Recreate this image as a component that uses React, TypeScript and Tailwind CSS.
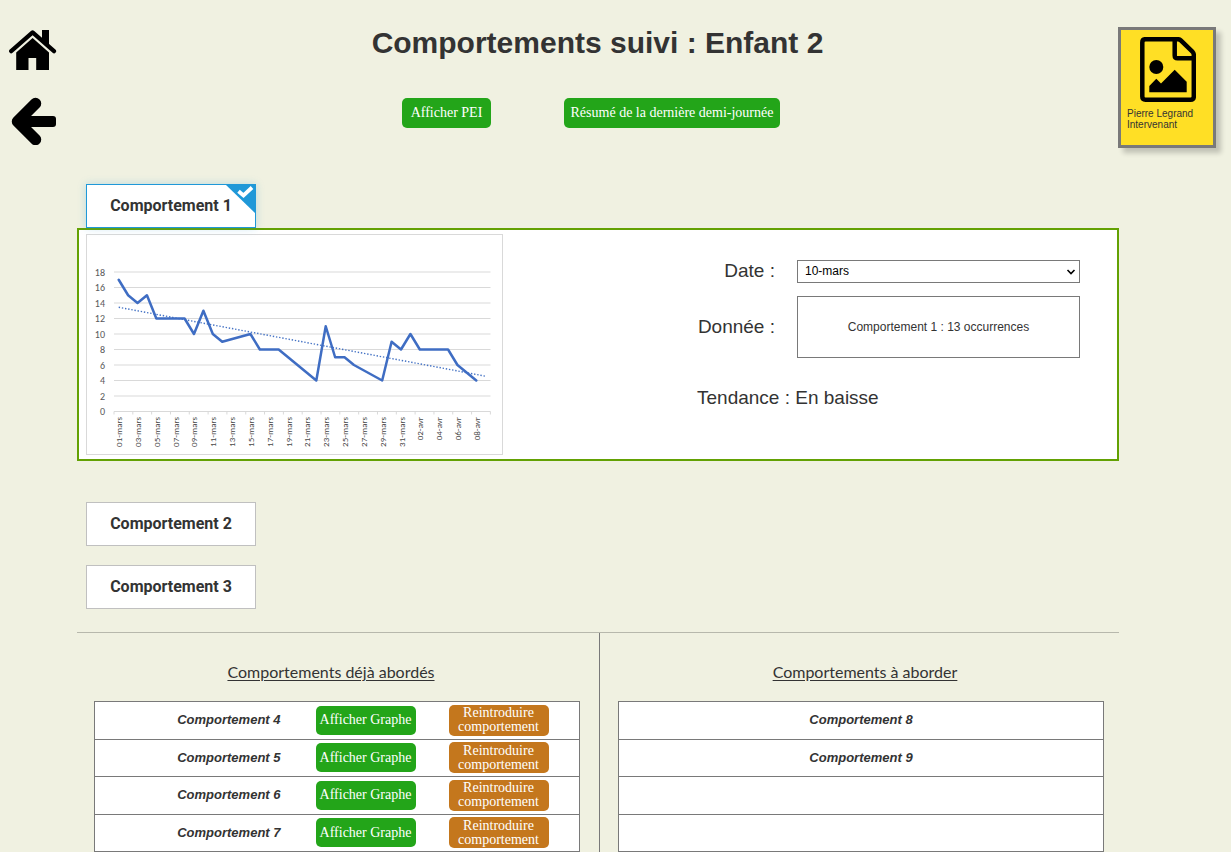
import React, { useState } from "react";

const POINTS: [number, number][] = [
  [1, 17], [2, 15], [3, 14], [4, 15], [5, 12], [8, 12], [9, 10], [10, 13], [11, 10],
  [12, 9], [15, 10], [16, 8], [18, 8], [22, 4], [23, 11], [24, 7], [25, 7], [26, 6],
  [29, 4], [30, 9], [31, 8], [32, 10], [33, 8], [36, 8], [37, 6], [39, 4],
];

const DAYS = [
  "01-mars", "03-mars", "05-mars", "07-mars", "09-mars", "11-mars", "13-mars",
  "15-mars", "17-mars", "19-mars", "21-mars", "23-mars", "25-mars", "27-mars",
  "29-mars", "31-mars", "02-avr", "04-avr", "06-avr", "08-avr",
];

const STEP = 9.41;
const chartX = (day: number) => 28 + (day - 0.5) * STEP;
const chartY = (value: number) => 177.5 - value * 7.75;

function HomeIcon() {
  return (
    <svg viewBox="0 0 48 42" className="h-[42px] w-12" aria-hidden="true">
      <path d="M33 1h7v17l-7-6z" />
      <path d="M2.2 22.2 23.6 3.4 45 22.2" fill="none" stroke="#000" strokeWidth="4.2" strokeLinecap="round" strokeLinejoin="round" />
      <path d="M23.6 9 40 23.5V41H27.2V29h-7.7v12H7.2V23.5z" />
    </svg>
  );
}

function BackIcon() {
  return (
    <svg viewBox="0 0 48 48" className="size-12" aria-hidden="true">
      <path d="M26.5 6.5 8.5 24.5l18 18" fill="none" stroke="#000" strokeWidth="11.5" strokeLinecap="round" strokeLinejoin="round" />
      <rect x="9" y="19" width="38" height="11" rx="3" />
    </svg>
  );
}

function FileImageIcon() {
  return (
    <svg viewBox="0 0 56 65" className="h-[65px] w-14" aria-hidden="true">
      <path d="M5.5 2.2H38q1.6 0 2.8 1.2L52.4 14.6q1.4 1.4 1.4 3.2V59.5q0 3.2-3.2 3.2H5.5q-3.2 0-3.2-3.2V5.4q0-3.2 3.2-3.2z" fill="none" stroke="#000" strokeWidth="4.5" />
      <path d="M34.7 3v15.5q0 2.8 2.8 2.8H53" fill="none" stroke="#000" strokeWidth="4.5" />
      <circle cx="16.3" cy="30" r="7" />
      <path d="M9.3 55.3v-6.3l7-7.3 4.7 4.7L34.7 32.7l12 12v10.6z" />
    </svg>
  );
}

function Chart() {
  return (
    <svg
      viewBox="0 0 417 221"
      className="h-[221px] w-[417px] shrink-0 font-['Carlito','Lato',sans-serif]"
      role="img"
      aria-label="Graphe Comportement 1"
    >
      <rect x="0.5" y="0.5" width="416" height="220" fill="#fff" stroke="#d9d9d9" />
      {[0, 2, 4, 6, 8, 10, 12, 14, 16, 18].map((v) => (
        <g key={v}>
          <line x1="28" x2="404.5" y1={chartY(v)} y2={chartY(v)} stroke="#d9d9d9" strokeWidth="1.2" />
          <text x="19" y={chartY(v) + 3.5} textAnchor="end" className="fill-[#595959] text-[10px]">{v}</text>
        </g>
      ))}
      {Array.from({ length: 21 }, (_, i) => (
        <line key={i} x1={28 + i * STEP * 2} x2={28 + i * STEP * 2} y1="177.5" y2="180.5" stroke="#d9d9d9" />
      ))}
      {DAYS.map((d, i) => (
        <text
          key={d}
          textAnchor="end"
          transform={`translate(${chartX(i * 2 + 1) + 3.5} 183) rotate(-90)`}
          className="fill-[#484848] text-[9px]"
        >
          {d}
        </text>
      ))}
      <line x1={chartX(1)} y1={chartY(13.45)} x2={chartX(40)} y2={chartY(4.55)} stroke="#4472c4" strokeWidth="1.4" strokeDasharray="1.4 1.8" />
      <polyline
        points={POINTS.map(([d, v]) => `${chartX(d)},${chartY(v)}`).join(" ")}
        fill="none"
        stroke="#3f6dc3"
        strokeWidth="2.5"
        strokeLinecap="round"
        strokeLinejoin="round"
      />
    </svg>
  );
}

function Action({ children, tone = "green", className = "" }: { children: React.ReactNode; tone?: "green" | "orange"; className?: string }) {
  return (
    <button
      type="button"
      className={`rounded-[5px] font-['Liberation_Serif',serif] text-sm leading-[14px] text-white ${tone === "green" ? "bg-[#23a519]" : "bg-[#c4771d]"} ${className}`}
    >
      {children}
    </button>
  );
}

function Tab({ label, active, onClick }: { label: string; active: boolean; onClick: () => void }) {
  return (
    <button
      type="button"
      aria-pressed={active}
      onClick={onClick}
      className={`relative ml-[9px] block h-11 w-[170px] border bg-white font-['Roboto',sans-serif] text-base font-bold ${active ? "border-[#1f98d8] shadow-[0_0_8px_rgba(31,152,216,0.25)]" : "border-[#c0c0c0]"}`}
    >
      {label}
      {active && (
        <svg viewBox="0 0 29 28" className="absolute top-0 right-0 h-7 w-[29px]" aria-hidden="true">
          <path d="M0 0h29v28z" fill="#1f98d8" />
          <path d="m12.5 6.2 5 4.3 8.5-8" fill="none" stroke="#fff" strokeWidth="3.8" />
        </svg>
      )}
    </button>
  );
}

const HEADING = "text-center font-['Lato',sans-serif] text-base leading-6 underline underline-offset-2";
const TABLE = "mt-[17px] h-[151px] w-full border-collapse border border-[#797979] bg-white";
const NAME = "text-[13px] leading-5 font-bold italic";

export default function App() {
  const [selected, setSelected] = useState(1);
  return (
    <div className="h-screen overflow-hidden bg-[#f0f1e1] font-['Liberation_Sans',Arial,sans-serif] text-[#333333]">
      <header className="flex h-[184px]">
        <nav className="flex w-[77px] flex-col gap-[26px] pt-[29px] pl-[9px] text-black">
          <a href="#accueil" aria-label="Accueil"><HomeIcon /></a>
          <a href="#retour" aria-label="Retour"><BackIcon /></a>
        </nav>
        <div className="flex-1 pt-6 text-center">
          <h1 className="text-[30px] leading-[38px] font-bold">Comportements suivi : Enfant 2</h1>
          <div className="mt-9 flex justify-center gap-[73px] pr-[13px]">
            <Action className="h-[30px] w-[89px]">Afficher PEI</Action>
            <Action className="h-[30px] w-[216px]">Résumé de la dernière demi-journée</Action>
          </div>
        </div>
        <div className="w-[113px] pt-[27px]">
          <div className="h-[121px] w-[98px] border-3 border-[#797979] bg-[#ffdf25] pt-[7px] text-black shadow-[5px_5px_5px_rgba(0,0,0,0.2)]">
            <div className="flex pl-[19px]"><FileImageIcon /></div>
            <p className="mt-[6px] pl-[6px] text-[10px] leading-[11px] text-[#333333]">Pierre Legrand<br />Intervenant</p>
          </div>
        </div>
      </header>

      <main className="mr-28 ml-[77px]">
        <Tab label="Comportement 1" active={selected === 1} onClick={() => setSelected(1)} />
        <section className="flex h-[233px] justify-between border-2 border-[#63a103] bg-white pt-1 pr-[37px] pl-[7px]">
          <Chart />
          <div className="w-[383px] pt-[25px] text-[19px] leading-6">
            <div className="flex items-center justify-between">
              <label htmlFor="date" className="w-[78px] text-right">Date :</label>
              <div className="relative w-[283px]">
                <select id="date" defaultValue="10-mars" className="block h-[23px] w-full appearance-none border border-[#797979] bg-white pl-[7px] text-[12px] leading-4 text-black">
                  <option>09-mars</option>
                  <option>10-mars</option>
                  <option>11-mars</option>
                </select>
                <svg viewBox="0 0 10 6" className="pointer-events-none absolute top-[9px] right-1 h-[6px] w-[10px]" aria-hidden="true">
                  <path d="m1.5 1 3.5 3.5L8.5 1" fill="none" stroke="#000" strokeWidth="1.6" />
                </svg>
              </div>
            </div>
            <div className="mt-[13px] flex items-center justify-between">
              <span className="w-[78px] text-right">Donnée :</span>
              <output className="flex h-[62px] w-[283px] items-center justify-center border border-[#797979] text-[12px]">Comportement 1 : 13 occurrences</output>
            </div>
            <p className="mt-7">Tendance : En baisse</p>
          </div>
        </section>

        <div className="mt-[41px] flex flex-col gap-[19px]">
          <Tab label="Comportement 2" active={selected === 2} onClick={() => setSelected(2)} />
          <Tab label="Comportement 3" active={selected === 3} onClick={() => setSelected(3)} />
        </div>

        <div className="mt-[23px] grid grid-cols-[522fr_520fr] border-t border-[#b7b8ac]">
          <section className="pt-[27px] pr-[19px] pl-[17px]">
            <h2 className={`${HEADING} pr-3`}>Comportements déjà abordés</h2>
            <table className={TABLE}>
              <tbody>
                {[4, 5, 6, 7].map((n) => (
                  <tr key={n} className="border-b border-[#797979]">
                    <td className={`w-[204px] p-0 text-right ${NAME} pr-[18px]`}>Comportement {n}</td>
                    <td className="p-0 pl-[17px]"><Action className="block h-[29px] w-[100px]">Afficher Graphe</Action></td>
                    <td className="w-[131px] p-0"><Action tone="orange" className="block h-[31px] w-[100px]">Reintroduire comportement</Action></td>
                  </tr>
                ))}
              </tbody>
            </table>
          </section>
          <section className="border-l border-[#797979] pt-[27px] pr-[15px] pl-[18px]">
            <h2 className={`${HEADING} pl-2`}>Comportements à aborder</h2>
            <table className={TABLE}>
              <tbody>
                {["Comportement 8", "Comportement 9", "", ""].map((name, i) => (
                  <tr key={i} className="border-b border-[#797979]">
                    <td className={`h-9 p-0 text-center ${NAME}`}>{name}</td>
                  </tr>
                ))}
              </tbody>
            </table>
          </section>
        </div>
      </main>
    </div>
  );
}
